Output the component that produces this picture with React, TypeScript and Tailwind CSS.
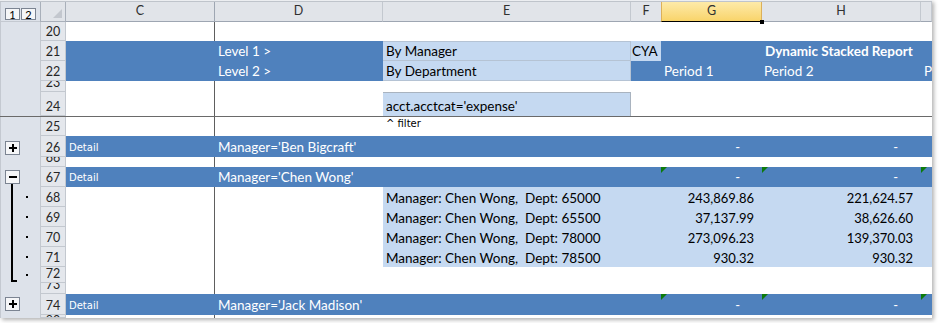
import React from "react";

const DARK = "bg-[#4f81bd] text-white";
const LIGHT = "bg-[#c5d9f1] text-black";
const FREEZE = "border-r border-[#5e5e5e]";
const SMALL = "font-['DejaVu_Sans',sans-serif] text-[10px] leading-none";
const TXT = "text-[13.5px] leading-none";
const NUM = "text-[13px] leading-none";

function OutlineBox({ sign }: { sign: "+" | "-" }) {
  return (
    <div className="ml-[4px] flex h-[14px] w-[15px] shrink-0 items-center justify-center border border-[#7b8492] bg-[#f5f6f8]">
      <svg width="8" height="8" viewBox="0 0 8 8">
        <rect x="0" y="3" width="8" height="2" fill="#000" />
        {sign === "+" && <rect x="3" y="0" width="2" height="8" fill="#000" />}
      </svg>
    </div>
  );
}

function Flag() {
  return (
    <svg width="6" height="6" viewBox="0 0 6 6" className="absolute left-0 top-0">
      <path d="M0 0H6L0 6Z" fill="#0c7a0c" />
    </svg>
  );
}

function Bar({ last }: { last?: boolean }) {
  return (
    <div className="flex w-full items-center">
      {last ? (
        <div className="ml-[10px] h-[15px] w-[6px] self-start border-b-2 border-l-2 border-black" />
      ) : (
        <div className="ml-[10px] w-[2px] self-stretch bg-black" />
      )}
      <div className={`${last ? "ml-[9px]" : "ml-[13px]"} h-[2px] w-[2px] bg-black`} />
    </div>
  );
}

function Row({ n, h, out, top, children }: { n: string; h: string; out?: React.ReactNode; top?: boolean; children?: React.ReactNode }) {
  return (
    <div className={`flex shrink-0 ${h}`}>
      <div className="flex w-[40px] shrink-0 border-l border-[#c4c9d1] bg-[#dde2ea]">{out}</div>
      <div
        className={`flex w-[26px] shrink-0 justify-center overflow-hidden border-x border-b border-[#c3c8cf] bg-[#e4e7ec] text-[12.5px] leading-none text-[#262626] ${
          top ? "items-start" : "items-end pb-[2px]"
        }`}
      >
        {n}
      </div>
      {children}
    </div>
  );
}

function Blank() {
  return (
    <>
      <div className={`w-[149px] shrink-0 ${FREEZE}`} />
      <div className="flex-1" />
    </>
  );
}

function GroupCells({ name, flags }: { name: string; flags?: boolean }) {
  return (
    <>
      <div className={`flex w-[149px] shrink-0 items-end pb-[4px] pl-[3px] ${DARK} ${SMALL}`}>Detail</div>
      <div className={`flex w-[168px] shrink-0 items-end whitespace-nowrap pb-[3px] pl-[3px] ${TXT} ${DARK}`}>{name}</div>
      <div className={`w-[248px] shrink-0 ${DARK}`} />
      <div className={`w-[30px] shrink-0 ${DARK}`} />
      <div className={`relative flex w-[101px] shrink-0 items-end justify-end pb-[3px] pr-[22px] ${NUM} ${DARK}`}>
        {flags && <Flag />}-
      </div>
      <div className={`relative flex w-[159px] shrink-0 items-end justify-end pb-[3px] pr-[23px] ${NUM} ${DARK}`}>
        {flags && <Flag />}-
      </div>
      <div className={`relative flex-1 ${DARK}`}>{flags && <Flag />}</div>
    </>
  );
}

function DataCells({ dept, g, h }: { dept: string; g: string; h: string }) {
  return (
    <>
      <div className={`w-[149px] shrink-0 ${FREEZE}`} />
      <div className="w-[168px] shrink-0" />
      <div className={`flex w-[248px] shrink-0 items-end whitespace-pre pb-[2px] pl-[3px] ${TXT} ${LIGHT}`}>
        Manager: Chen Wong,  Dept: {dept}
      </div>
      <div className={`w-[30px] shrink-0 ${LIGHT}`} />
      <div className={`flex w-[101px] shrink-0 items-end justify-end pb-[2px] pr-[8px] ${NUM} ${LIGHT}`}>{g}</div>
      <div className={`flex w-[159px] shrink-0 items-end justify-end pb-[2px] pr-[8px] ${NUM} ${LIGHT}`}>{h}</div>
      <div className={`flex-1 ${LIGHT}`} />
    </>
  );
}

const data = [
  { n: "68", dept: "65000", g: "243,869.86", h: "221,624.57" },
  { n: "69", dept: "65500", g: "37,137.99", h: "38,626.60" },
  { n: "70", dept: "78000", g: "273,096.23", h: "139,370.03" },
  { n: "71", dept: "78500", g: "930.32", h: "930.32" },
];

export default function App() {
  return (
    <div className="h-[323px] w-[939px] overflow-hidden bg-white">
      <div className="flex h-[318px] w-[932px] flex-col overflow-hidden bg-white font-['Lato',sans-serif] shadow-[2px_2px_4px_rgba(0,0,0,0.3)]">
        <div className="h-[2px] shrink-0 border-b border-[#bfc4cb] bg-[#eceef1]" />

        {/* column headers */}
        <div className="flex h-[20px] shrink-0 bg-[#e1e4e9] text-[12.5px] leading-none text-[#303030]">
          <div className="flex w-[40px] shrink-0 items-end gap-[1px] border-b border-l border-[#c4c9d1] bg-[#dde2ea] pb-[1px] pl-[4px]">
            <div className="flex h-[12px] w-[15px] items-center justify-center border border-[#7b8492] bg-[#f5f6f8] text-[11px] text-black">1</div>
            <div className="flex h-[12px] w-[15px] items-center justify-center border border-[#7b8492] bg-[#f5f6f8] text-[11px] text-black">2</div>
          </div>
          <div className="flex w-[26px] shrink-0 items-end justify-end border-x border-b border-[#a9b0ba] pb-[3px] pr-[3px]">
            <svg width="9" height="9" viewBox="0 0 9 9">
              <path d="M9 0V9H0Z" fill="#c3c7ce" />
            </svg>
          </div>
          <div className={`flex w-[149px] shrink-0 items-center justify-center border-b border-[#9ea6b2] ${FREEZE}`}>C</div>
          <div className="flex w-[168px] shrink-0 items-center justify-center border-b border-r border-b-[#9ea6b2] border-r-[#c3c8cf]">D</div>
          <div className="flex w-[248px] shrink-0 items-center justify-center border-b border-r border-b-[#9ea6b2] border-r-[#c3c8cf]">E</div>
          <div className="flex w-[30px] shrink-0 items-center justify-center border-b border-b-[#9ea6b2]">F</div>
          <div className="relative flex w-[101px] shrink-0 items-center justify-center border-x border-b border-x-[#dcb05a] border-b-black bg-gradient-to-b from-[#fdeaa8] to-[#f9d469]">
            G
            <div className="absolute -bottom-[3px] -right-[3px] h-[4px] w-[4px] bg-black" />
          </div>
          <div className="flex w-[159px] shrink-0 items-center justify-center border-b border-r border-b-[#9ea6b2] border-r-[#c3c8cf]">H</div>
          <div className="flex-1 border-b border-r border-b-[#9ea6b2] border-r-[#c3c8cf]" />
        </div>

        <Row n="20" h="h-[19px]">
          <Blank />
        </Row>

        <Row n="21" h="h-[20px]">
          <div className={`w-[149px] shrink-0 ${DARK}`} />
          <div className={`flex w-[168px] shrink-0 items-end pb-[3px] pl-[3px] ${TXT} ${DARK}`}>Level 1 &gt;</div>
          <div className={`flex w-[248px] shrink-0 items-end border-y border-r border-[#b5c3d4] pb-[2px] pl-[3px] ${TXT} ${LIGHT}`}>By Manager</div>
          <div className={`flex w-[30px] shrink-0 items-end overflow-hidden pb-[3px] pl-[1px] ${TXT} ${LIGHT}`}>CYA</div>
          <div className={`w-[101px] shrink-0 ${DARK}`} />
          <div className={`flex w-[159px] shrink-0 items-end whitespace-nowrap pb-[3px] pl-[3px] font-bold ${TXT} ${DARK}`}>Dynamic Stacked Report</div>
          <div className={`flex-1 ${DARK}`} />
        </Row>

        <Row n="22" h="h-[20px]">
          <div className={`w-[149px] shrink-0 ${DARK}`} />
          <div className={`flex w-[168px] shrink-0 items-end pb-[3px] pl-[3px] ${TXT} ${DARK}`}>Level 2 &gt;</div>
          <div className={`flex w-[248px] shrink-0 items-end border-b border-r border-[#b5c3d4] pb-[2px] pl-[3px] ${TXT} ${LIGHT}`}>By Department</div>
          <div className={`w-[30px] shrink-0 ${DARK}`} />
          <div className={`flex w-[101px] shrink-0 items-end pb-[3px] pl-[3px] ${TXT} ${DARK}`}>Period 1</div>
          <div className={`flex w-[159px] shrink-0 items-end pb-[3px] pl-[2px] ${TXT} ${DARK}`}>Period 2</div>
          <div className={`flex flex-1 items-end overflow-hidden pb-[3px] pl-[3px] ${TXT} ${DARK}`}>P</div>
        </Row>

        <Row n="23" h="h-[11px]">
          <Blank />
        </Row>

        <Row n="24" h="h-[24px]">
          <div className={`w-[149px] shrink-0 ${FREEZE}`} />
          <div className="w-[168px] shrink-0" />
          <div className={`flex w-[248px] shrink-0 items-end border-r border-t border-[#a9b3bf] pb-[3px] pl-[3px] ${TXT} ${LIGHT}`}>
            acct.acctcat='expense'
          </div>
          <div className="flex-1" />
        </Row>

        <div className="h-px shrink-0 bg-[#6a6a6a]" />

        <Row n="25" h="h-[19px]">
          <div className={`w-[149px] shrink-0 ${FREEZE}`} />
          <div className="w-[168px] shrink-0" />
          <div className={`flex flex-1 items-end pb-[7px] pl-[3px] text-black ${SMALL}`}>^ filter</div>
        </Row>

        <Row
          n="26"
          h="h-[21px]"
          out={
            <div className="pt-[5px]">
              <OutlineBox sign="+" />
            </div>
          }
        >
          <GroupCells name="Manager='Ben Bigcraft'" />
        </Row>

        <Row n="66" h="h-[10px]">
          <Blank />
        </Row>

        <Row
          n="67"
          h="h-[20px]"
          out={
            <div className="flex flex-col items-start pt-[3px]">
              <OutlineBox sign="-" />
              <div className="ml-[10px] w-[2px] flex-1 bg-black" />
            </div>
          }
        >
          <GroupCells name="Manager='Chen Wong'" flags />
        </Row>

        {data.map((d) => (
          <Row key={d.n} n={d.n} h="h-[20px]" out={<Bar />}>
            <DataCells dept={d.dept} g={d.g} h={d.h} />
          </Row>
        ))}

        <Row n="72" h="h-[16px]" out={<Bar last />}>
          <Blank />
        </Row>

        <Row n="73" h="h-[11px]">
          <Blank />
        </Row>

        <Row
          n="74"
          h="h-[21px]"
          out={
            <div className="pt-[3px]">
              <OutlineBox sign="+" />
            </div>
          }
        >
          <GroupCells name="Manager='Jack Madison'" flags />
        </Row>

        <Row n="80" h="h-[3px]" top>
          <Blank />
        </Row>
      </div>
    </div>
  );
}
